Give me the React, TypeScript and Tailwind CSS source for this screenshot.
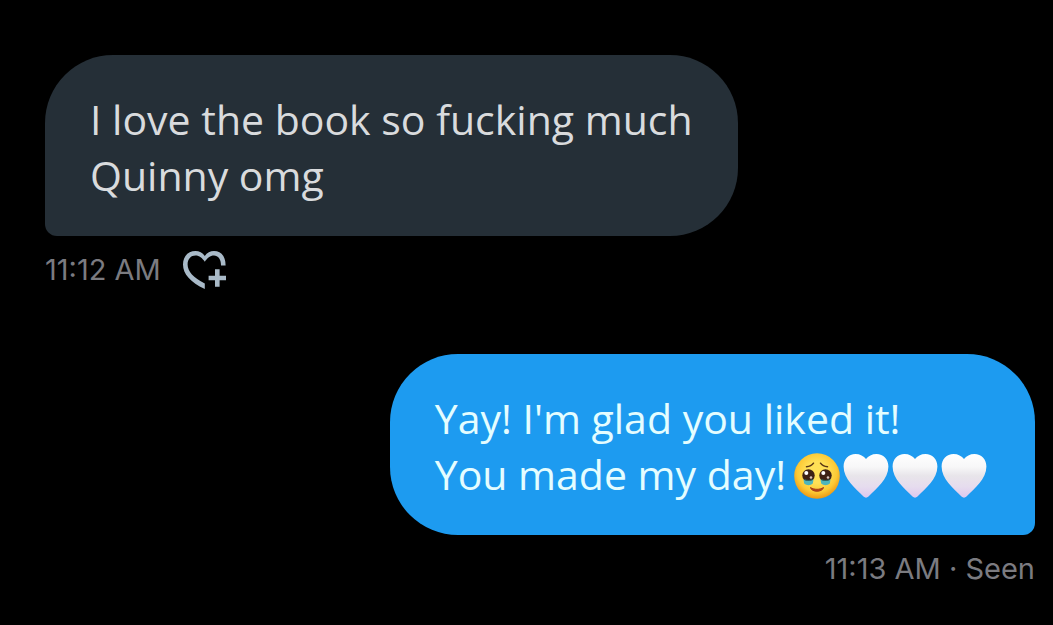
import type { ReactNode } from "react";
import clsx from "clsx";

const HeartPlusIcon = () => (
    <svg viewBox="0 0 44 38" className="w-11 h-[38px]" fill="currentColor" aria-hidden="true">
        <path d="M42.6 14.4H38C38 8 35 4.6 31 4.6c-4 0-6.5 2.4-9.2 6.2C19.1 7 16.5 4.6 12.5 4.6 8 4.6 4.6 8 4.6 13.5c0 7 5.8 13.2 17.2 19V38C7.5 31.4 0 23 0 13.5 0 5 5.5 0 12.5 0c3.7 0 7 1.8 9.3 5C24 1.8 27.3 0 31 0c7 0 11.6 5.2 11.6 14.4Z" />
        <path d="M32 18.3h4.6v6.4H43v4.6h-6.4v6.4H32v-6.4h-6.4v-4.6H32Z" />
    </svg>
);

const TearyFace = () => (
    <svg viewBox="0 0 49 46" className="w-[49px] h-[46px]" role="img" aria-label="Face holding back tears">
        <defs>
            <radialGradient id="face" cx="0.5" cy="0.42" r="0.58">
                <stop offset="0.4" stopColor="#ffe056" />
                <stop offset="0.75" stopColor="#fcc935" />
                <stop offset="1" stopColor="#ee9712" />
            </radialGradient>
        </defs>
        <circle cx="23" cy="23" r="22.8" fill="url(#face)" />
        <path d="M12.5 13.8c3.2-.2 5.6-1.5 7-3.6M33.5 13.8c-3.2-.2-5.6-1.5-7-3.6" fill="none" stroke="#5a3513" strokeWidth="1.5" strokeLinecap="round" />
        <circle cx="14.5" cy="22.5" r="6.2" fill="#3d2115" />
        <circle cx="31.5" cy="22.5" r="6.2" fill="#3d2115" />
        <path d="M9.5 26.5c3 1.7 7 1.7 10 0l-.7 4c-2.6 2.3-6 2.3-8.6 0ZM26.5 26.5c3 1.7 7 1.7 10 0l-.7 4c-2.6 2.3-6 2.3-8.6 0Z" fill="#4fb5ba" />
        <path d="M10.5 26.7c2.6 1 5.4 1 8 0M27.5 26.7c2.6 1 5.4 1 8 0" fill="none" stroke="#286b70" strokeWidth="1" />
        <circle cx="12.3" cy="20" r="2" fill="#fff" />
        <circle cx="29.3" cy="20" r="2" fill="#fff" />
        <circle cx="17" cy="24.5" r="1.3" fill="#d8c5bd" />
        <circle cx="34" cy="24.5" r="1.3" fill="#d8c5bd" />
        <path d="M16.5 34.5c3.6 2.4 9.4 2.4 13 0-1 5-12 5-13 0Z" fill="#b5411d" stroke="#a63d18" strokeWidth="1" strokeLinejoin="round" />
    </svg>
);

const WhiteHeart = () => (
    <svg viewBox="0 0 49 46" className="w-[49px] h-[46px]" role="img" aria-label="White heart">
        <defs>
            <linearGradient id="heart" x1="0" y1="0" x2="0" y2="1">
                <stop offset="0" stopColor="#ffffff" />
                <stop offset="0.3" stopColor="#f7f7f8" />
                <stop offset="0.5" stopColor="#e8e5ea" />
                <stop offset="0.75" stopColor="#e6dcee" />
                <stop offset="1" stopColor="#dcc8ef" />
            </linearGradient>
        </defs>
        <path d="M23 6C20.8 3 17 1 12.5 1 5.7 1 .6 6 .6 13.5.6 26 12 35 20.5 43.5c1.5 1.5 3.5 1.5 5 0C34 35 45.400 26 45.4 13.5 45.4 6 40.3 1 33.5 1 29 1 25.2 3 23 6Z" fill="url(#heart)" />
    </svg>
);

const Bubble = ({ mine, children }: { mine?: boolean; children: ReactNode }) => (
    <div
        className={clsx(
            "w-fit max-w-full px-[45px] pt-9 pb-[33px] rounded-[68px] text-[41px] leading-[56px]",
            mine ? "rounded-br-[12px] bg-[#1d9bf0] text-[#e4fdff]" : "rounded-bl-[12px] bg-[#252f37] text-[#d9dbdd]"
        )}
    >
        {children}
    </div>
);

const App = () => {
    return (
        <main className="min-h-screen bg-black pt-[55px] pb-9 pl-[45px] pr-[18px] font-['Open_Sans',sans-serif]">
            <section className="flex flex-col items-start">
                <Bubble>
                    <p>I love the book so fucking much</p>
                    <p>Quinny omg</p>
                </Bubble>
                <div className="flex items-center gap-[22px] mt-[15px] h-[38px] text-[#7b7b80] font-['Inter',sans-serif] text-[29px] leading-[38px]">
                    <time>11:12 AM</time>
                    <button type="button" aria-label="Add reaction" className="text-[#a9bac8]">
                        <HeartPlusIcon />
                    </button>
                </div>
            </section>

            <section className="flex flex-col items-end mt-[65px]">
                <Bubble mine>
                    <p>Yay! I'm glad you liked it!</p>
                    <p className="flex items-center gap-2">
                        You made my day!
                        <span className="flex pt-1">
                            <TearyFace />
                            <WhiteHeart />
                            <WhiteHeart />
                            <WhiteHeart />
                        </span>
                    </p>
                </Bubble>
                <p className="mt-[15px] text-[#7b7b80] font-['Inter',sans-serif] text-[29px] leading-[38px]">
                    <time>11:13 AM</time> · Seen
                </p>
            </section>
        </main>
    );
};

export default App;
